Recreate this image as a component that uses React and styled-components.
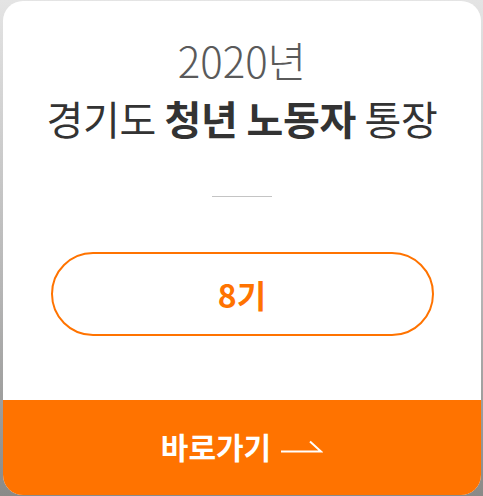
import React from 'react';
import styled, { createGlobalStyle } from 'styled-components';

const GlobalStyle = createGlobalStyle`
  html, body {
    margin: 0;
    padding: 0;
  }
  body {
    width: 483px;
    height: 496px;
    overflow: hidden;
    background: linear-gradient(to bottom, #e4e4e4 0%, #b4b4b4 60%, #8a8a88 100%);
    font-family: "Noto Sans CJK KR", "Noto Sans", sans-serif;
  }
`;

const Card = styled.div`
  margin: 1px 2px 0 3px;
  height: 494px;
  display: flex;
  flex-direction: column;
  background: #fff;
  border-radius: 20px;
  overflow: hidden;
`;

const Body = styled.div`
  flex: 1;
  display: flex;
  flex-direction: column;
  align-items: center;
  padding-top: 34px;
`;

const Year = styled.div`
  font-size: 42px;
  font-weight: 300;
  line-height: 50px;
  color: #5a5a5a;
`;

const Title = styled.h1`
  margin: 8px 0 0;
  font-size: 40px;
  font-weight: 400;
  line-height: 50px;
  color: #333;
  letter-spacing: -0.3px;

  strong {
    font-weight: 700;
  }
`;

const Divider = styled.hr`
  width: 60px;
  height: 1px;
  margin: 53px 0 0;
  border: 0;
  background: #c4c4c4;
`;

const Pill = styled.div`
  margin-top: 55px;
  width: 383px;
  height: 84px;
  box-sizing: border-box;
  display: flex;
  align-items: center;
  justify-content: center;
  border: 2px solid #ff7300;
  border-radius: 42px;
  color: #ff7300;
  font-size: 32px;
  font-weight: 700;
`;

const GoBar = styled.a`
  height: 95px;
  display: flex;
  align-items: center;
  justify-content: center;
  gap: 10px;
  background: #ff7300;
  color: #fff;
  font-size: 30px;
  font-weight: 700;
  text-decoration: none;
  padding-bottom: 4px;
  box-sizing: border-box;
`;

const Arrow = () => (
  <svg width="42" height="14" viewBox="0 0 42 14" fill="none" stroke="#fff" strokeWidth="2">
    <path d="M0 12.5 H40 L29 2.5" />
  </svg>
);

const App = () => (
  <>
    <GlobalStyle />
    <Card>
      <Body>
        <Year>2020년</Year>
        <Title>
          경기도 <strong>청년 노동자</strong> 통장
        </Title>
        <Divider />
        <Pill>8기</Pill>
      </Body>
      <GoBar href="#">
        바로가기
        <Arrow />
      </GoBar>
    </Card>
  </>
);

export default App;
